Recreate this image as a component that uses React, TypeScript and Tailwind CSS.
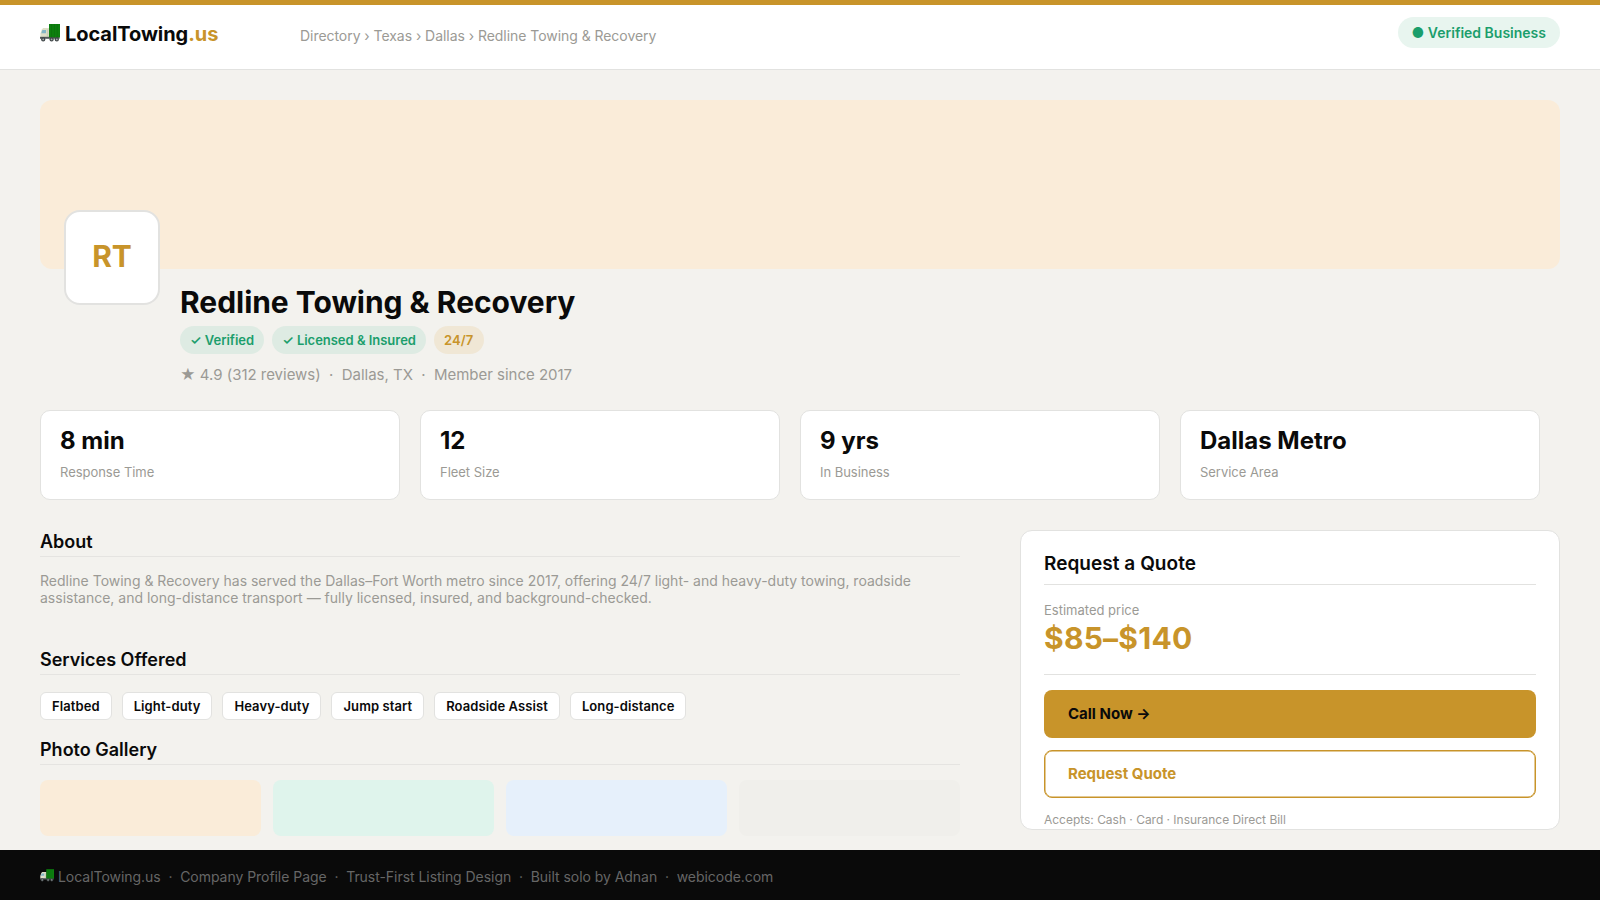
const stats = [
  { value: "8 min", label: "Response Time" },
  { value: "12", label: "Fleet Size" },
  { value: "9 yrs", label: "In Business" },
  { value: "Dallas Metro", label: "Service Area" },
];

const services = ["Flatbed", "Light-duty", "Heavy-duty", "Jump start", "Roadside Assist", "Long-distance"];

const photos = ["bg-[#faecd9]", "bg-[#dff4ec]", "bg-[#e6f0fb]", "bg-[#f0efeb]"];

const TruckIcon = ({ className }: { className: string }) => (
  <svg viewBox="0 0 20 18" className={className}>
    <path d="M1.8 5.5 3.2 4h6v10H.4V9.6z" fill="#dedfc9" />
    <path d="M2.4 6h3.6v3.2H1.2z" fill="#83b5c6" />
    <path d="M6.8 5.5h1.6v7H6.8z" fill="#c9ccb8" />
    <path d="M0 12.8h19.6v2H0z" fill="#53595b" />
    <path d="M9 0h11v13.4H9z" fill="#0d800f" />
    <path d="M11.6 0v13.4M14.4 0v13.4M17.2 0v13.4" stroke="#0a6b0c" strokeWidth=".6" />
    <circle cx="3.2" cy="15.4" r="2.1" fill="#3f4547" />
    <circle cx="11.6" cy="15.4" r="2.1" fill="#3f4547" />
    <circle cx="16.8" cy="15.4" r="2.1" fill="#3f4547" />
    <circle cx="3.2" cy="15.4" r=".9" fill="#a5acae" />
    <circle cx="11.6" cy="15.4" r=".9" fill="#a5acae" />
    <circle cx="16.8" cy="15.4" r=".9" fill="#a5acae" />
  </svg>
);

const Header = () => (
  <header className="flex h-[70px] items-start border-t-[5px] border-b border-t-[#c8942a] border-b-[#e2e2e0] bg-white px-10">
    <div className="flex w-[260px] pt-[17px] text-[20px] leading-6 font-bold tracking-[-0.06px]">
      <TruckIcon className="mt-[2px] mr-[5px] h-[18px] w-5" />
      <span>LocalTowing</span>
      <span className="text-[#c8942a]">.us</span>
    </div>
    <nav className="pt-[21px] text-[14px] leading-5 tracking-[-0.048px] text-[#9b9a95]">
      Directory › Texas › Dallas › Redline Towing &amp; Recovery
    </nav>
    <div className="mt-3 ml-auto flex h-[31px] items-center rounded-full bg-[#e8f5ef] px-[14px] text-[14px] font-semibold text-[#1b9e6c]">
      ● Verified Business
    </div>
  </header>
);

const SectionTitle = ({ children }: { children: string }) => (
  <h2 className="h-[31px] border-b border-[#e5e4e1] text-[18px] leading-8 font-semibold">{children}</h2>
);

const QuoteCard = () => (
  <aside className="h-[300px] w-[540px] overflow-hidden rounded-xl border border-[#e2e2e0] bg-white px-[23px] pt-[17px]">
    <h2 className="h-[37px] border-b border-[#e2e2e0] text-[19px] leading-8 font-semibold tracking-[0.04px]">Request a Quote</h2>
    <div className="h-[90px] border-b border-[#e2e2e0] pt-[15px]">
      <p className="text-[13px] leading-5 text-[#9b9a95]">Estimated price</p>
      <p className="text-[30px] leading-9 font-bold tracking-[0.25px] text-[#c8942a]">$85–$140</p>
    </div>
    <button className="mt-[15px] flex h-12 w-full items-center rounded-lg bg-[#c8942a] px-6 text-[15px] font-bold">
      Call Now →
    </button>
    <button className="mt-3 flex h-12 w-full items-center rounded-lg border border-[#c8942a] px-[23px] text-[15px] font-bold text-[#c8942a] shadow-[inset_0_0_0_0.5px_#c8942a]">
      Request Quote
    </button>
    <p className="mt-3 text-[12px] leading-5 tracking-[-0.02px] text-[#9b9a95]">Accepts: Cash · Card · Insurance Direct Bill</p>
  </aside>
);

const App = () => {
  return (
    <div className="flex h-[900px] w-[1600px] flex-col overflow-hidden bg-[#f3f2ee] font-['Inter',sans-serif] text-[#0a0a0a]">
      <Header />

      <main className="flex-1 px-10 pt-[30px]">
        <div className="h-[169px] rounded-xl bg-[#faecd9]" />

        <section className="flex h-[141px] pl-6">
          {/* logo tile overlaps the cover */}
          <div className="-mt-[59px] flex h-[95px] w-24 items-center justify-center rounded-2xl border-2 border-[#e2e2e0] bg-white pb-[3px] text-[30px] font-bold text-[#c8942a]">
            RT
          </div>
          <div className="ml-5 pt-[15px]">
            <h1 className="text-[30px] leading-9 font-bold tracking-[-0.03px]">Redline Towing &amp; Recovery</h1>
            <div className="mt-[6px] flex gap-2 text-[13px] font-semibold text-[#1b9e6c]">
              <span className="flex h-7 items-center rounded-full bg-[#deebe3] px-[10px] pt-[2px]">✓ Verified</span>
              <span className="flex h-7 items-center rounded-full bg-[#deebe3] px-[10px] pt-[2px] tracking-[-0.02px]">✓ Licensed &amp; Insured</span>
              <span className="flex h-7 items-center rounded-full bg-[#f0e7d5] px-[10px] pt-[2px] tracking-[0.15px] text-[#c8942a]">24/7</span>
            </div>
            <p className="mt-[11px] text-[15px] leading-5 tracking-[-0.02px] text-[#9b9a95]">
              ★ 4.9 (312 reviews) &nbsp;·&nbsp; Dallas, TX &nbsp;·&nbsp; Member since 2017
            </p>
          </div>
        </section>

        <section className="flex gap-5">
          {stats.map((stat) => (
            <div key={stat.label} className="h-[90px] w-[360px] rounded-[10px] border border-[#e2e2e0] bg-white px-[19px] pt-[14px]">
              <p className="text-[24px] leading-8 font-bold">{stat.value}</p>
              <p className="mt-[5px] text-[13px] leading-5 tracking-[-0.03px] text-[#9b9a95]">{stat.label}</p>
            </div>
          ))}
        </section>

        <div className="mt-[30px] flex justify-between">
          <div className="-mt-1 w-[920px]">
            <SectionTitle>About</SectionTitle>
            <p className="mt-[15px] h-[72px] text-[14px] leading-[17px] text-[#9b9a95]">
              Redline Towing &amp; Recovery has served the Dallas–Fort Worth metro since 2017, offering 24/7 light- and heavy-duty towing, roadside assistance, and long-distance transport — fully licensed, insured, and background-checked.
            </p>

            <SectionTitle>Services Offered</SectionTitle>
            <div className="mt-[17px] mb-[14px] flex gap-[10px]">
              {services.map((service) => (
                <span key={service} className="flex h-7 items-center rounded-md border border-[#e2e2e0] bg-white px-[11px] pt-[2px] text-[13px] font-semibold tracking-[0.09px]">
                  {service}
                </span>
              ))}
            </div>

            <SectionTitle>Photo Gallery</SectionTitle>
            <div className="mt-[15px] grid grid-cols-4 gap-3">
              {photos.map((photo) => (
                <div key={photo} className={`h-14 rounded-lg ${photo}`} />
              ))}
            </div>
          </div>

          <QuoteCard />
        </div>
      </main>

      <footer className="flex h-[50px] items-center bg-[#0a0a0a] px-10 text-[14px] tracking-[-0.043px] text-[#666666]">
        <TruckIcon className="mr-[4px] h-[13px] w-[14px]" />
        <span className="pt-[2px]">
          LocalTowing.us &nbsp;·&nbsp; Company Profile Page &nbsp;·&nbsp; Trust-First Listing Design &nbsp;·&nbsp; Built solo by Adnan &nbsp;·&nbsp; webicode.com
        </span>
      </footer>
    </div>
  );
};

export default App;
